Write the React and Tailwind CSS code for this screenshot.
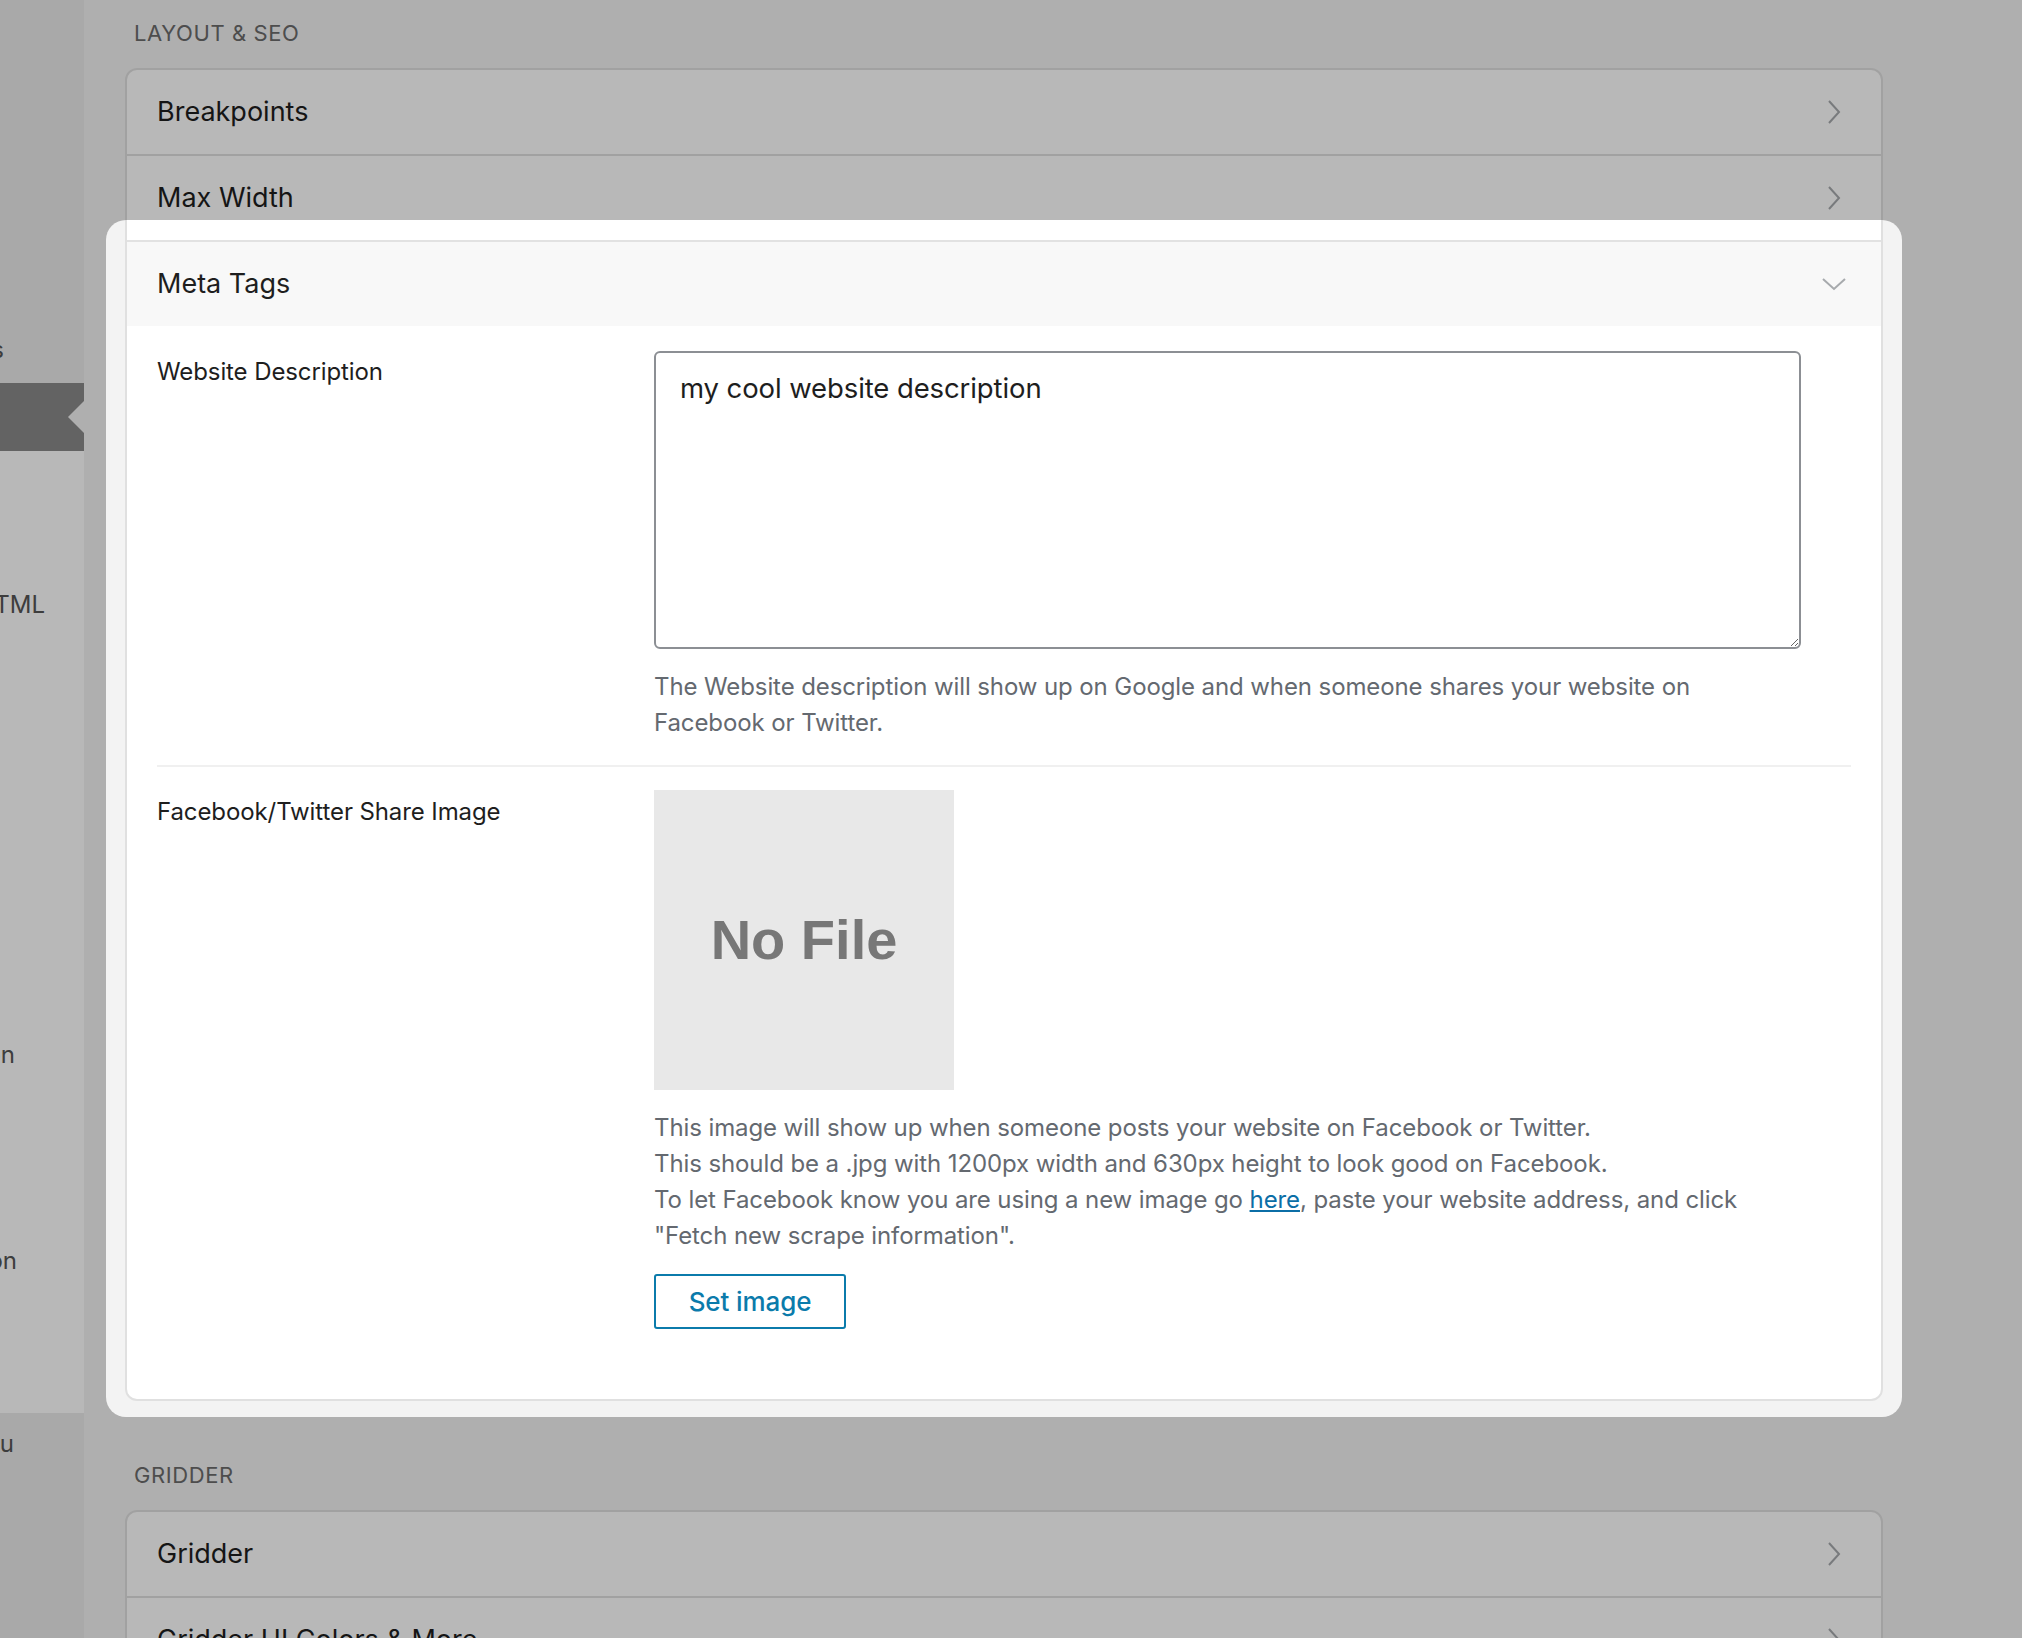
import React from "react";

const ChevronRight = () => (
  <svg width="14" height="24" viewBox="0 0 14 24" fill="none" stroke="#a7aaad" strokeWidth="2">
    <path d="M2 1l10 11L2 23" />
  </svg>
);

const ChevronDown = () => (
  <svg width="24" height="14" viewBox="0 0 24 14" fill="none" stroke="#a7aaad" strokeWidth="2">
    <path d="M1 2l11 10L23 2" />
  </svg>
);

const SectionLabel = ({ children }) => (
  <div className="pl-[9px] pt-[1px] text-[22px] leading-[28px] uppercase tracking-[0.6px] text-[#6b6b6b]">{children}</div>
);

const Row = ({ title, first }) => (
  <div
    className={`flex items-center justify-between pl-[30px] pr-[40px] text-[27px] text-[#1e1e1e] ${
      first ? "h-[84px]" : "h-[86px] border-t-2 border-[#e0e0e0]"
    }`}
  >
    <span>{title}</span>
    <ChevronRight />
  </div>
);

const SideLabel = ({ pad, children }) => (
  <div className={`flex h-[40px] items-center justify-end whitespace-nowrap ${pad}`}>{children}</div>
);

export default function App() {
  return (
    <div className="flex h-screen overflow-hidden bg-[#f3f3f3] font-['Inter',sans-serif]">
      {/* sidebar, mostly scrolled off to the left */}
      <aside className="flex w-[84px] shrink-0 flex-col overflow-hidden text-[24px] text-[#555]">
        <div className="h-[383px] shrink-0 bg-[#ebebeb] pt-[330px]">
          <SideLabel pad="pr-[80px]">Sections</SideLabel>
        </div>
        <div className="flex h-[68px] shrink-0 items-center justify-end bg-[#8a8a8a]">
          <div className="h-0 w-0 border-y-[16px] border-r-[16px] border-y-transparent border-r-[#f3f3f3]" />
        </div>
        <div className="h-[962px] shrink-0 bg-white pt-[134px]">
          <SideLabel pad="pr-[39px]">Custom HTML</SideLabel>
          <div className="h-[410px]" />
          <SideLabel pad="pr-[69px]">Navigation</SideLabel>
          <div className="h-[166px]" />
          <SideLabel pad="pr-[67px]">Mobile Navigation</SideLabel>
        </div>
        <div className="flex-1 bg-[#ebebeb] pt-[11px]">
          <SideLabel pad="pr-[70px]">Menu</SideLabel>
        </div>
      </aside>

      <main className="flex-1 pl-[41px] pt-[18px]">
        <SectionLabel>Layout &amp; SEO</SectionLabel>
        <div className="mt-[21px] w-[1758px] rounded-[12px] border-2 border-[#e0e0e0] bg-white">
          <Row title="Breakpoints" first />
          <Row title="Max Width" />

          <div className="relative">
            {/* spotlight */}
            <div className="pointer-events-none absolute -top-[20px] -right-[21px] -bottom-[18px] -left-[21px] z-10 rounded-[20px] shadow-[0_0_0_4000px_rgba(0,0,0,0.28)]" />

            <div className="flex h-[86px] items-center justify-between border-t-2 border-[#e2e2e2] bg-[#f8f8f8] pl-[30px] pr-[35px] text-[27px] text-[#1e1e1e]">
              <span>Meta Tags</span>
              <ChevronDown />
            </div>

            <div className="px-[30px] text-[24px] leading-[36px] tracking-[-0.1px]">
              <div className="flex border-b-2 border-[#f0f0f0] pt-[25px] pb-[24px]">
                <div className="w-[497px] shrink-0 pt-[3px] text-[#1e1e1e]">Website Description</div>
                <div>
                  <textarea
                    defaultValue="my cool website description"
                    className="block h-[298px] w-[1147px] rounded-[6px] border-2 border-[#8c8f94] px-[24px] pt-[14px] text-[27.5px] leading-[42px] tracking-[-0.1px] text-[#1e1e1e] outline-none"
                  />
                  <p className="mt-[20px] text-[#646970]">
                    The Website description will show up on Google and when someone shares your website on
                    <br />
                    Facebook or Twitter.
                  </p>
                </div>
              </div>

              <div className="flex pt-[23px] pb-[70px]">
                <div className="w-[497px] shrink-0 pt-[4px] text-[#1e1e1e]">Facebook/Twitter Share Image</div>
                <div>
                  <div className="flex h-[300px] w-[300px] items-center justify-center bg-[#e8e8e8] font-['Liberation_Sans',sans-serif] text-[56px] font-bold tracking-normal text-[#777]">
                    No File
                  </div>
                  <p className="mt-[20px] text-[#646970]">
                    This image will show up when someone posts your website on Facebook or Twitter.
                    <br />
                    This should be a .jpg with 1200px width and 630px height to look good on Facebook.
                    <br />
                    To let Facebook know you are using a new image go{" "}
                    <a href="#" className="text-[#0b6ea6] underline">here</a>, paste your website address, and click
                    <br />
                    "Fetch new scrape information".
                  </p>
                  <button className="mt-[20px] h-[55px] w-[192px] rounded-[3px] border-2 border-[#0b7bab] bg-white text-[26px] font-medium text-[#0b7bab]">
                    Set image
                  </button>
                </div>
              </div>
            </div>
          </div>
        </div>

        <div className="mt-[59px]">
          <SectionLabel>Gridder</SectionLabel>
        </div>
        <div className="mt-[21px] w-[1758px] rounded-[12px] border-2 border-[#e0e0e0] bg-white">
          <Row title="Gridder" first />
          <Row title="Gridder UI Colors & More" />
        </div>
      </main>
    </div>
  );
}
